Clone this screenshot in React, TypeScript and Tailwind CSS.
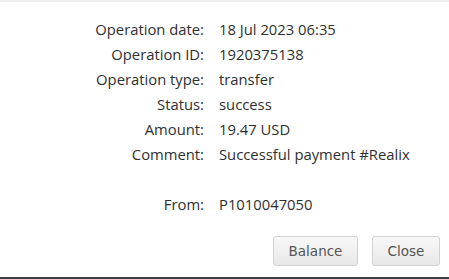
const rows: [string, string][] = [
  ["Operation date:", "18 Jul 2023 06:35"],
  ["Operation ID:", "1920375138"],
  ["Operation type:", "transfer"],
  ["Status:", "success"],
  ["Amount:", "19.47 USD"],
  ["Comment:", "Successful payment #Realix"],
  ["", ""],
  ["From:", "P1010047050"],
];

export default function App() {
  return (
    <div className="w-[449px] h-[279px] bg-white flex flex-col overflow-hidden">
      <div className="h-[2px] bg-[#efefef]" />
      <div
        className="grid grid-cols-[204px_1fr] gap-x-[15px] pt-[15px] text-[14.8px] leading-[25px] text-[#2f2f2f]"
        style={{ fontFamily: '"Open Sans", sans-serif' }}
      >
        {rows.map(([label, value], i) => (
          <div key={i} className="contents">
            <div className="text-right h-[25px]">{label}</div>
            <div className="h-[25px] whitespace-nowrap">{value}</div>
          </div>
        ))}
      </div>
      <div
        className="flex justify-end gap-[14px] pr-[9px] mt-[19px]"
        style={{ fontFamily: '"DejaVu Sans", sans-serif' }}
      >
        <button className="w-[85px] h-[30px] rounded-[3px] border border-[#d2d2d2] bg-gradient-to-b from-[#f8f8f8] to-[#e8e8e8] text-[13.5px] text-[#555]">
          Balance
        </button>
        <button className="w-[68px] h-[30px] rounded-[3px] border border-[#d2d2d2] bg-gradient-to-b from-[#f8f8f8] to-[#e8e8e8] text-[13.5px] text-[#555]">
          Close
        </button>
      </div>
      <div className="flex-1" />
      <div className="h-[2px] bg-[#3b4149]" />
    </div>
  );
}
